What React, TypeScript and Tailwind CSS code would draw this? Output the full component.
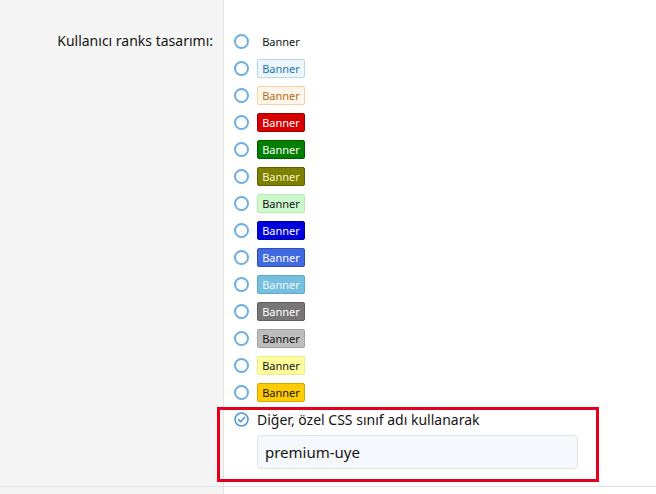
import React from "react";

const banners: { cls: string }[] = [
  { cls: "border-transparent bg-transparent text-[#141414]" },
  { cls: "border-[#b9d8f0] bg-[#edf6fd] text-[#2577b1]" },
  { cls: "border-[#f6d29e] bg-[#fef6ea] text-[#b26c20]" },
  { cls: "border-[#a00000] bg-[#d70000] text-white" },
  { cls: "border-[#005a00] bg-[#007f00] text-white" },
  { cls: "border-[#5f5f00] bg-[#7f7f00] text-[#f3f3c8]" },
  { cls: "border-[#b6ecb6] bg-[#ccf8cc] text-[#141414]" },
  { cls: "border-[#0000a8] bg-[#0000dd] text-white" },
  { cls: "border-[#3050b8] bg-[#4169e1] text-white" },
  { cls: "border-[#5fa9c9] bg-[#75c0de] text-[#eef8fc]" },
  { cls: "border-[#5e5e5e] bg-[#777777] text-white" },
  { cls: "border-[#a0a0a0] bg-[#bdbdbd] text-[#141414]" },
  { cls: "border-[#ecec88] bg-[#ffff9e] text-[#141414]" },
  { cls: "border-[#d9a800] bg-[#ffcc00] text-[#141414]" },
];

function Radio() {
  return (
    <span className="inline-block w-[15px] h-[15px] rounded-full border-2 border-[#6aaee3] bg-white shrink-0" />
  );
}

function CheckedRadio() {
  return (
    <svg width="15" height="15" viewBox="0 0 15 15" className="shrink-0">
      <circle cx="7.5" cy="7.5" r="6.5" fill="white" stroke="#4f9bd9" strokeWidth="1.6" />
      <path d="M4.4 7.6 L6.6 9.8 L10.7 5.4" fill="none" stroke="#4f9bd9" strokeWidth="1.6" strokeLinecap="round" strokeLinejoin="round" />
    </svg>
  );
}

export default function App() {
  return (
    <div
      className="relative w-[656px] h-[494px] overflow-hidden bg-white"
      style={{ fontFamily: '"Noto Sans", "Segoe UI", sans-serif' }}
    >
      <div className="flex border-b border-[#e3e3e3]">
        <div className="w-[224px] shrink-0 bg-[#f5f5f5] border-r border-[#e3e3e3] pt-[31px] pr-[10px] text-right text-[14px] leading-[20px] text-[#141414]">
          Kullanıcı ranks tasarımı:
        </div>
        <div className="flex-1 pl-[10px] pt-[28px] pb-[17px]">
          <ul className="flex flex-col">
            {banners.map((b, i) => (
              <li key={i} className="flex items-center h-[27px] gap-[8px]">
                <Radio />
                <span
                  className={`inline-flex items-center justify-center w-[48px] h-[19px] rounded-[2px] border text-[11px] leading-none ${b.cls}`}
                >
                  Banner
                </span>
              </li>
            ))}
          </ul>
          <div className="flex items-center h-[27px] gap-[8px]">
            <CheckedRadio />
            <span className="text-[14px] text-[#141414]">Diğer, özel CSS sınıf adı kullanarak</span>
          </div>
          <div className="pl-[23px] pt-[2px]">
            <input
              readOnly
              value="premium-uye"
              className="w-[321px] h-[34px] rounded-[4px] border border-[#dfe4ea] bg-[#f5f9fd] px-[7px] text-[15px] text-[#141414] outline-none"
              style={{ fontFamily: '"Noto Sans", "Segoe UI", sans-serif' }}
            />
          </div>
        </div>
      </div>
      <div className="flex h-[20px]">
        <div className="w-[224px] shrink-0 bg-[#f5f5f5] border-r border-[#e3e3e3]" />
        <div className="flex-1" />
      </div>
      <div className="absolute left-[217px] top-[407px] w-[382px] h-[75px] border-[3px] border-[#e2001a] pointer-events-none" />
    </div>
  );
}
